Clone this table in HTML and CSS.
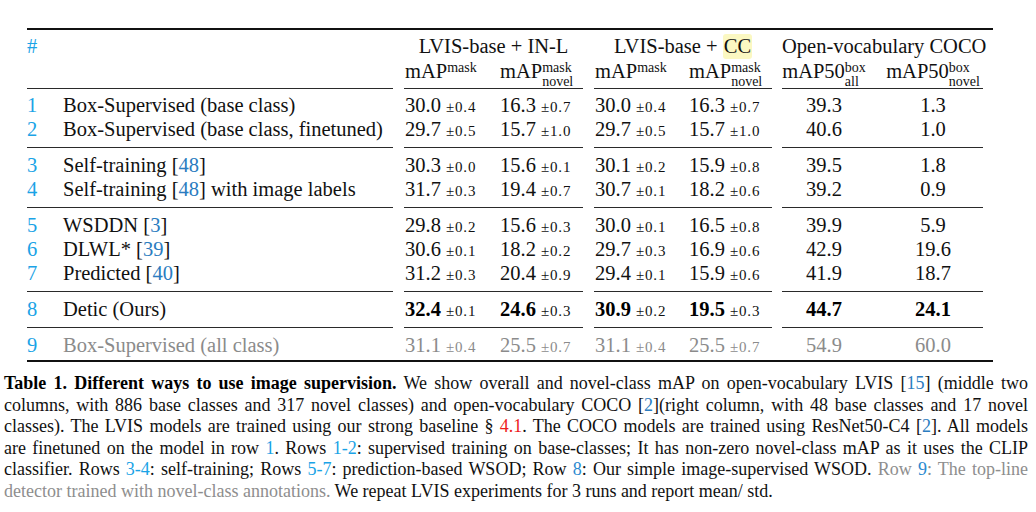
FILE: index.html
```html
<!DOCTYPE html>
<html lang="en">
<head>
<meta charset="utf-8">
<title>Table 1</title>
<link rel="stylesheet" href="styles.css">
</head>
<body>
<div class="table-wrap">
<table class="results">
  <colgroup>
    <col class="w-num"><col class="w-label"><col class="w-gap1">
    <col class="w-c"><col class="w-d"><col class="w-gap1">
    <col class="w-e"><col class="w-f"><col class="w-gap2">
    <col class="w-g"><col class="w-h"><col class="w-tail">
  </colgroup>
  <tbody>
    <tr class="hd1">
      <td class="num">#</td><td></td><td class="gap"></td>
      <td colspan="2" class="center">LVIS-base + IN-L</td><td class="gap"></td>
      <td colspan="2" class="center">LVIS-base + <span class="hl">CC</span></td><td class="gap"></td>
      <td colspan="2" class="center">Open-vocabulary COCO</td><td></td>
    </tr>
    <tr class="hd2 last">
      <td></td><td></td><td class="gap"></td>
      <td class="c">mAP<span class="ss"><span>mask</span></span></td>
      <td class="d">mAP<span class="ss"><span>mask</span><span>novel</span></span></td><td class="gap"></td>
      <td class="e">mAP<span class="ss"><span>mask</span></span></td>
      <td class="f">mAP<span class="ss"><span>mask</span><span>novel</span></span></td><td class="gap"></td>
      <td class="g">mAP50<span class="ss"><span>box</span><span>all</span></span></td>
      <td class="h">mAP50<span class="ss"><span>box</span><span>novel</span></span></td><td class="gap"></td>
    </tr>

    <tr class="first">
      <td class="num">1</td><td>Box-Supervised (base class)</td><td class="gap"></td>
      <td class="c">30.0 <span class="pm">±0.4</span></td><td class="d">16.3 <span class="pm">±0.7</span></td><td class="gap"></td>
      <td class="e">30.0 <span class="pm">±0.4</span></td><td class="f">16.3 <span class="pm">±0.7</span></td><td class="gap"></td>
      <td class="g">39.3</td><td class="h">1.3</td><td class="gap"></td>
    </tr>
    <tr class="last">
      <td class="num">2</td><td>Box-Supervised (base class, finetuned)</td><td class="gap"></td>
      <td class="c">29.7 <span class="pm">±0.5</span></td><td class="d">15.7 <span class="pm">±1.0</span></td><td class="gap"></td>
      <td class="e">29.7 <span class="pm">±0.5</span></td><td class="f">15.7 <span class="pm">±1.0</span></td><td class="gap"></td>
      <td class="g">40.6</td><td class="h">1.0</td><td class="gap"></td>
    </tr>

    <tr class="next">
      <td class="num">3</td><td>Self-training [<span class="cite">48</span>]</td><td class="gap"></td>
      <td class="c">30.3 <span class="pm">±0.0</span></td><td class="d">15.6 <span class="pm">±0.1</span></td><td class="gap"></td>
      <td class="e">30.1 <span class="pm">±0.2</span></td><td class="f">15.9 <span class="pm">±0.8</span></td><td class="gap"></td>
      <td class="g">39.5</td><td class="h">1.8</td><td class="gap"></td>
    </tr>
    <tr class="last">
      <td class="num">4</td><td>Self-training [<span class="cite">48</span>] with image labels</td><td class="gap"></td>
      <td class="c">31.7 <span class="pm">±0.3</span></td><td class="d">19.4 <span class="pm">±0.7</span></td><td class="gap"></td>
      <td class="e">30.7 <span class="pm">±0.1</span></td><td class="f">18.2 <span class="pm">±0.6</span></td><td class="gap"></td>
      <td class="g">39.2</td><td class="h">0.9</td><td class="gap"></td>
    </tr>

    <tr class="next">
      <td class="num">5</td><td>WSDDN [<span class="cite">3</span>]</td><td class="gap"></td>
      <td class="c">29.8 <span class="pm">±0.2</span></td><td class="d">15.6 <span class="pm">±0.3</span></td><td class="gap"></td>
      <td class="e">30.0 <span class="pm">±0.1</span></td><td class="f">16.5 <span class="pm">±0.8</span></td><td class="gap"></td>
      <td class="g">39.9</td><td class="h">5.9</td><td class="gap"></td>
    </tr>
    <tr>
      <td class="num">6</td><td>DLWL* [<span class="cite">39</span>]</td><td class="gap"></td>
      <td class="c">30.6 <span class="pm">±0.1</span></td><td class="d">18.2 <span class="pm">±0.2</span></td><td class="gap"></td>
      <td class="e">29.7 <span class="pm">±0.3</span></td><td class="f">16.9 <span class="pm">±0.6</span></td><td class="gap"></td>
      <td class="g">42.9</td><td class="h">19.6</td><td class="gap"></td>
    </tr>
    <tr class="last">
      <td class="num">7</td><td>Predicted [<span class="cite">40</span>]</td><td class="gap"></td>
      <td class="c">31.2 <span class="pm">±0.3</span></td><td class="d">20.4 <span class="pm">±0.9</span></td><td class="gap"></td>
      <td class="e">29.4 <span class="pm">±0.1</span></td><td class="f">15.9 <span class="pm">±0.6</span></td><td class="gap"></td>
      <td class="g">41.9</td><td class="h">18.7</td><td class="gap"></td>
    </tr>

    <tr class="next last">
      <td class="num">8</td><td>Detic (Ours)</td><td class="gap"></td>
      <td class="c"><b>32.4</b> <span class="pm">±0.1</span></td><td class="d"><b>24.6</b> <span class="pm">±0.3</span></td><td class="gap"></td>
      <td class="e"><b>30.9</b> <span class="pm">±0.2</span></td><td class="f"><b>19.5</b> <span class="pm">±0.3</span></td><td class="gap"></td>
      <td class="g"><b>44.7</b></td><td class="h"><b>24.1</b></td><td class="gap"></td>
    </tr>

    <tr class="next final gray">
      <td class="num">9</td><td>Box-Supervised (all class)</td><td class="gap"></td>
      <td class="c">31.1 <span class="pm">±0.4</span></td><td class="d">25.5 <span class="pm">±0.7</span></td><td class="gap"></td>
      <td class="e">31.1 <span class="pm">±0.4</span></td><td class="f">25.5 <span class="pm">±0.7</span></td><td class="gap"></td>
      <td class="g">54.9</td><td class="h">60.0</td><td class="gap"></td>
    </tr>
  </tbody>
</table>
</div>

<p class="caption">
  <span class="ln"><b>Table 1. Different ways to use image supervision.</b> We show overall and novel-class mAP on open-vocabulary LVIS [<span class="cite">15</span>] (middle two</span>
  <span class="ln">columns, with 886 base classes and 317 novel classes) and open-vocabulary COCO [<span class="cite">2</span>](right column, with 48 base classes and 17 novel</span>
  <span class="ln">classes). The LVIS models are trained using our strong baseline § <span class="red">4.1</span>. The COCO models are trained using ResNet50-C4 [<span class="cite">2</span>]. All models</span>
  <span class="ln">are finetuned on the model in row <span class="ref">1</span>. Rows <span class="ref">1-2</span>: supervised training on base-classes; It has non-zero novel-class mAP as it uses the CLIP</span>
  <span class="ln">classifier. Rows <span class="ref">3-4</span>: self-training; Rows <span class="ref">5-7</span>: prediction-based WSOD; Row <span class="ref2">8</span>: Our simple image-supervised WSOD. <span class="muted">Row <span class="ref2">9</span>: The top-line</span></span>
  <span class="ln end"><span class="muted">detector trained with novel-class annotations.</span> We repeat LVIS experiments for 3 runs and report mean/ std.</span>
</p>
</body>
</html>
```

FILE: styles.css
```css
html, body {
  margin: 0;
  padding: 0;
  background: #ffffff;
}

body {
  font-family: "Liberation Serif", "Times New Roman", serif;
  color: #111111;
}

.table-wrap {
  padding: 28px 0 0 27px;
}

.results {
  border-collapse: separate;
  border-spacing: 0;
  table-layout: fixed;
  width: 966px;
  border-top: 2px solid #111111;
  border-bottom: 2px solid #111111;
  font-size: 20.5px;
  line-height: 24px;
}

.w-num { width: 36px; }
.w-label { width: 330px; }
.w-gap1 { width: 11px; }
.w-gap2 { width: 10px; }
.w-c { width: 96px; }
.w-d { width: 83px; }
.w-e { width: 95px; }
.w-f { width: 83px; }
.w-g { width: 101px; }
.w-h { width: 100px; }
.w-tail { width: 10px; }

.results td {
  padding: 0;
  white-space: nowrap;
  vertical-align: top;
  text-align: left;
}

.results td.center { text-align: center; }
.results td.c, .results td.e { padding-left: 1px; }
.results td.g { text-align: center; padding-right: 17px; }
.results td.h { text-align: center; }

.num { color: #1aa3e6; }
.cite { color: #2b7cc0; }

.hd1 td { padding-top: 4px; }
.hd2 td { padding-top: 1px; }
tr.hd2.last td { padding-bottom: 5px; }
tr.first td { padding-top: 4px; }
tr.next td { padding-top: 5px; }
tr.last td { padding-bottom: 6px; border-bottom: 1px solid #2a2a2a; }
tr.last td.gap { border-bottom: none; }
tr.final td { padding-bottom: 3px; }

.hl {
  background: #fbf8c2;
  border-radius: 3px;
  padding: 1px 1px 2px;
}

.ss {
  display: inline-flex;
  flex-direction: column;
  align-items: flex-start;
  height: 14px;
  font-size: 14px;
  line-height: 14px;
  vertical-align: 6px;
}

.ss > span {
  flex: none;
}

.pm {
  font-size: 15px;
  line-height: 1;
  letter-spacing: 0.8px;
}

.gray td { color: #8b8b8b; }
.gray td.num { color: #1aa3e6; }

b { font-weight: bold; color: #000000; }

.caption {
  margin: 11px 8px 0 4px;
  font-size: 18px;
  line-height: 21.6px;
  color: #111111;
}

.ln {
  display: block;
  text-align: justify;
  text-align-last: justify;
  white-space: nowrap;
}

.ln.end { text-align-last: left; }

.ref { color: #1aa3e6; }
.ref2 { color: #2b8ad0; }
.red { color: #ee1c1c; }
.muted { color: #8e8e8e; }
.muted .ref2 { color: #2b8ad0; }
```
